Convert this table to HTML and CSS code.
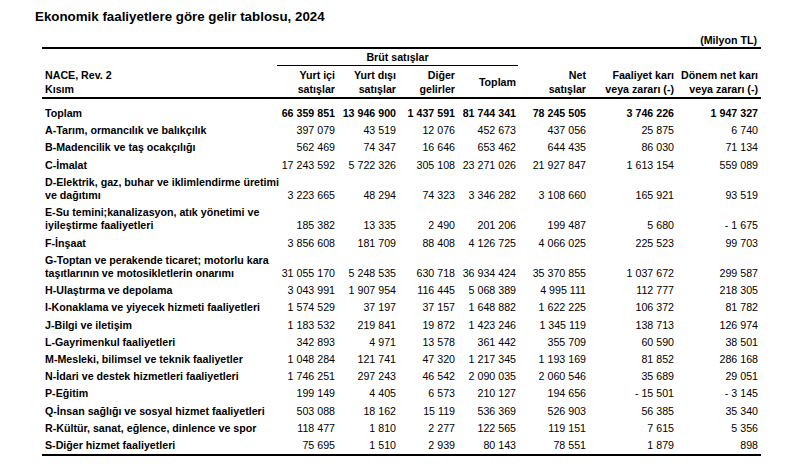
FILE: index.html
```html
<!DOCTYPE html>
<html lang="tr">
<head>
<meta charset="utf-8">
<title>Ekonomik faaliyetlere göre gelir tablosu, 2024</title>
<link rel="stylesheet" href="styles.css">
</head>
<body>
<div class="page">
  <h1 class="title">Ekonomik faaliyetlere göre gelir tablosu, 2024</h1>
  <div class="unit">(Milyon TL)</div>
  <table class="data">
    <colgroup>
      <col class="c-label"><col class="c-yi"><col class="c-yd"><col class="c-dg"><col class="c-tp"><col class="c-net"><col class="c-fk"><col class="c-dn">
    </colgroup>
    <thead>
      <tr class="h1row">
        <th></th>
        <th colspan="4" class="group">Brüt satışlar</th>
        <th></th><th></th><th></th>
      </tr>
      <tr class="h2row">
        <th class="lab">NACE, Rev. 2<br>Kısım</th>
        <th>Yurt içi<br>satışlar</th>
        <th>Yurt dışı<br>satışlar</th>
        <th>Diğer<br>gelirler</th>
        <th class="mid">Toplam</th>
        <th>Net<br>satışlar</th>
        <th>Faaliyet karı<br>veya zararı (-)</th>
        <th>Dönem net karı<br>veya zararı (-)</th>
      </tr>
    </thead>
    <tbody>
      <tr class="total first"><td class="lab">Toplam</td><td>66 359 851</td><td>13 946 900</td><td>1 437 591</td><td>81 744 341</td><td>78 245 505</td><td>3 746 226</td><td>1 947 327</td></tr>
      <tr><td class="lab">A-Tarım, ormancılık ve balıkçılık</td><td>397 079</td><td>43 519</td><td>12 076</td><td>452 673</td><td>437 056</td><td>25 875</td><td>6 740</td></tr>
      <tr><td class="lab">B-Madencilik ve taş ocakçılığı</td><td>562 469</td><td>74 347</td><td>16 646</td><td>653 462</td><td>644 435</td><td>86 030</td><td>71 134</td></tr>
      <tr><td class="lab">C-İmalat</td><td>17 243 592</td><td>5 722 326</td><td>305 108</td><td>23 271 026</td><td>21 927 847</td><td>1 613 154</td><td>559 089</td></tr>
      <tr><td class="lab">D-Elektrik, gaz, buhar ve iklimlendirme üretimi<br>ve dağıtımı</td><td>3 223 665</td><td>48 294</td><td>74 323</td><td>3 346 282</td><td>3 108 660</td><td>165 921</td><td>93 519</td></tr>
      <tr><td class="lab">E-Su temini;kanalizasyon, atık yönetimi ve<br>iyileştirme faaliyetleri</td><td>185 382</td><td>13 335</td><td>2 490</td><td>201 206</td><td>199 487</td><td>5 680</td><td>- 1 675</td></tr>
      <tr><td class="lab">F-İnşaat</td><td>3 856 608</td><td>181 709</td><td>88 408</td><td>4 126 725</td><td>4 066 025</td><td>225 523</td><td>99 703</td></tr>
      <tr><td class="lab">G-Toptan ve perakende ticaret; motorlu kara<br>taşıtlarının ve motosikletlerin onarımı</td><td>31 055 170</td><td>5 248 535</td><td>630 718</td><td>36 934 424</td><td>35 370 855</td><td>1 037 672</td><td>299 587</td></tr>
      <tr><td class="lab">H-Ulaştırma ve depolama</td><td>3 043 991</td><td>1 907 954</td><td>116 445</td><td>5 068 389</td><td>4 995 111</td><td>112 777</td><td>218 305</td></tr>
      <tr><td class="lab">I-Konaklama ve yiyecek hizmeti faaliyetleri</td><td>1 574 529</td><td>37 197</td><td>37 157</td><td>1 648 882</td><td>1 622 225</td><td>106 372</td><td>81 782</td></tr>
      <tr><td class="lab">J-Bilgi ve iletişim</td><td>1 183 532</td><td>219 841</td><td>19 872</td><td>1 423 246</td><td>1 345 119</td><td>138 713</td><td>126 974</td></tr>
      <tr><td class="lab">L-Gayrimenkul faaliyetleri</td><td>342 893</td><td>4 971</td><td>13 578</td><td>361 442</td><td>355 709</td><td>60 590</td><td>38 501</td></tr>
      <tr><td class="lab">M-Mesleki, bilimsel ve teknik faaliyetler</td><td>1 048 284</td><td>121 741</td><td>47 320</td><td>1 217 345</td><td>1 193 169</td><td>81 852</td><td>286 168</td></tr>
      <tr><td class="lab">N-İdari ve destek hizmetleri faaliyetleri</td><td>1 746 251</td><td>297 243</td><td>46 542</td><td>2 090 035</td><td>2 060 546</td><td>35 689</td><td>29 051</td></tr>
      <tr><td class="lab">P-Eğitim</td><td>199 149</td><td>4 405</td><td>6 573</td><td>210 127</td><td>194 656</td><td>- 15 501</td><td>- 3 145</td></tr>
      <tr><td class="lab">Q-İnsan sağlığı ve sosyal hizmet faaliyetleri</td><td>503 088</td><td>18 162</td><td>15 119</td><td>536 369</td><td>526 903</td><td>56 385</td><td>35 340</td></tr>
      <tr><td class="lab">R-Kültür, sanat, eğlence, dinlence ve spor</td><td>118 477</td><td>1 810</td><td>2 277</td><td>122 565</td><td>119 151</td><td>7 615</td><td>5 356</td></tr>
      <tr><td class="lab">S-Diğer hizmet faaliyetleri</td><td>75 695</td><td>1 510</td><td>2 939</td><td>80 143</td><td>78 551</td><td>1 879</td><td>898</td></tr>
    </tbody>
  </table>
</div>
</body>
</html>
```
FILE: styles.css
```css
html, body {
  margin: 0;
  padding: 0;
  background: #fff;
}
body {
  font-family: "Liberation Sans", Arial, sans-serif;
  color: #000;
}
.page {
  padding-top: 9px;
}
.title {
  margin: 0 0 0 35px;
  font-size: 13.33px;
  line-height: 16px;
  font-weight: bold;
}
.unit {
  width: 719px;
  box-sizing: border-box;
  margin: 8px 0 0 42px;
  padding-right: 4px;
  text-align: right;
  font-size: 10.67px;
  line-height: 14px;
  font-weight: bold;
}
.data {
  margin-left: 42px;
  width: 719px;
  table-layout: fixed;
  border-collapse: collapse;
  font-size: 10.67px;
  border-top: 2px solid #000;
  border-bottom: 2px solid #000;
}
.c-label { width: 235px; }
.c-yi { width: 60px; }
.c-yd { width: 61px; }
.c-dg { width: 59px; }
.c-tp { width: 61px; }
.c-net { width: 70px; }
.c-fk { width: 88px; }
.c-dn { width: 85px; }

.data th, .data td {
  padding: 2px 2px;
  text-align: right;
  white-space: nowrap;
  vertical-align: bottom;
  line-height: 13.2px;
}
.data th {
  font-weight: bold;
}
.data .lab {
  text-align: left;
  padding-left: 3px;
  font-weight: bold;
}
.data th:last-child, .data td:last-child {
  padding-right: 3px;
}
.h1row th {
  padding: 1px 2px;
  line-height: 14px;
}
.h1row .group {
  text-align: center;
  border-bottom: 1px solid #000;
}
.h2row th {
  padding: 2px 2px 1px;
  line-height: 14px;
  border-bottom: 2px solid #000;
}
.h2row th.mid {
  vertical-align: middle;
}
.total td {
  font-weight: bold;
}
.first td {
  padding-top: 8px;
}
```
